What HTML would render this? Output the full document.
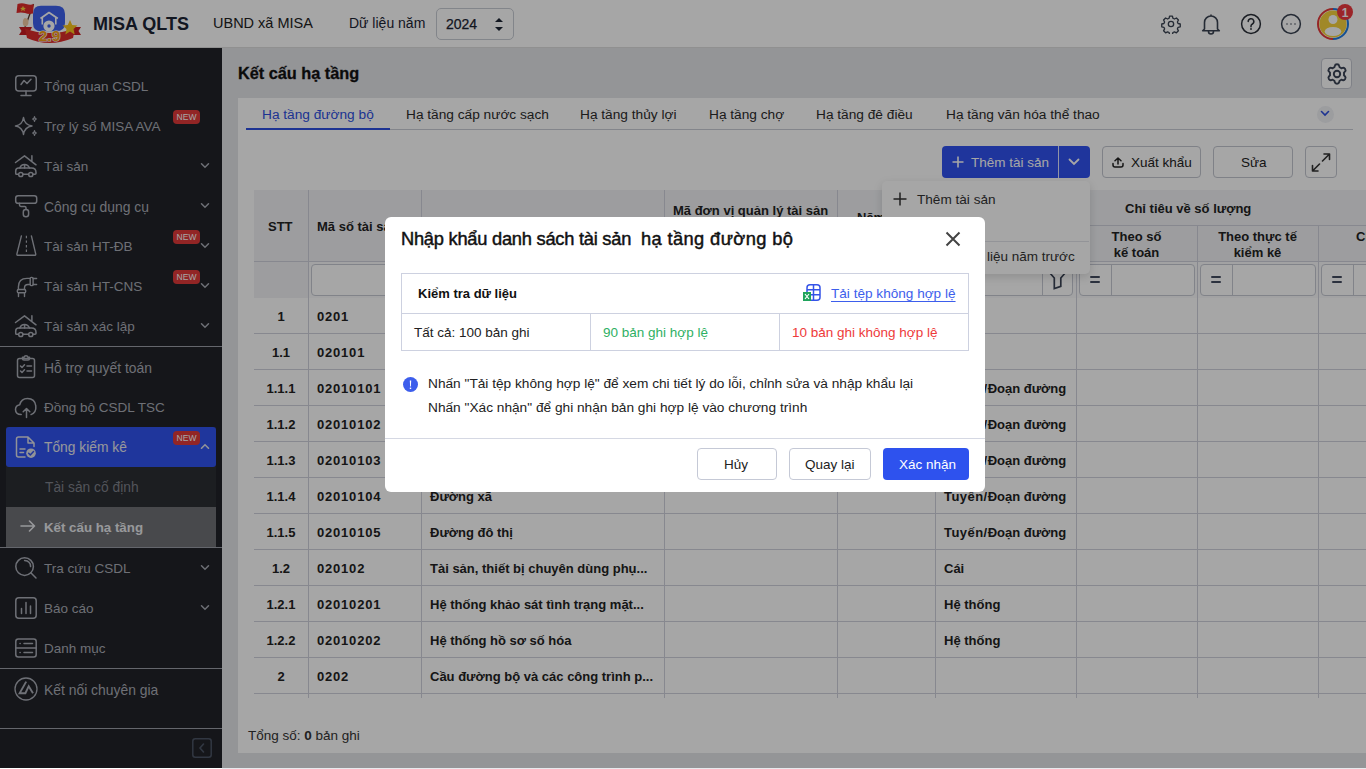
<!DOCTYPE html>
<html><head><meta charset="utf-8">
<style>
*{box-sizing:border-box;margin:0;padding:0}
html,body{width:1366px;height:769px;overflow:hidden;background:#fff;font-family:"Liberation Sans",sans-serif;color:#212121}
.abs{position:absolute}
#hdr{position:absolute;left:0;top:0;width:1366px;height:48px;background:#fff;border-bottom:1px solid #ddd}
#side{position:absolute;left:0;top:48px;width:222px;height:720px;background:#212328}
.si{position:absolute;left:0;width:222px;height:40px;color:#a9acb6;font-size:13.5px}
.si .ic{position:absolute;left:15px;top:9px;width:22px;height:22px;overflow:visible}
.si .tx{position:absolute;left:44px;top:12.5px;white-space:nowrap}
.si .chev{position:absolute;left:200px;top:16px;width:10px;height:7px}
.new{position:absolute;left:173px;top:4px;width:27px;height:14px;background:#e03a3a;border-radius:4px;color:#fff;font-size:8.5px;line-height:14px;text-align:center}
.sep{position:absolute;left:0;width:222px;height:1px;background:#9a9da6}
#content{position:absolute;left:222px;top:48px;width:1144px;height:720px;background:#e4e5e9}
#overlay{position:absolute;left:0;top:0;width:1366px;height:768px;background:rgba(0,0,0,0.35)}
#modal{position:absolute;left:385px;top:217px;width:600px;height:275px;background:#fff;border-radius:6px}

.t{position:absolute;white-space:nowrap}
.btn{position:absolute;border:1px solid #c3c6cf;border-radius:4px;background:#fff}
.cl{position:absolute;width:1px;background:#cfd2dc}
.rl{position:absolute;height:1px;background:#cfd2dc}
.th{position:absolute;font-size:13px;font-weight:bold;color:#222;white-space:nowrap}
.td{position:absolute;font-size:13px;font-weight:bold;color:#222;white-space:nowrap}
</style></head>
<body>
<div id="hdr">
  <svg class="abs" style="left:15px;top:0" width="70" height="46" viewBox="0 0 70 46">
    <line x1="9" y1="30" x2="18.5" y2="4" stroke="#5a3a2a" stroke-width="1.3"/>
    <path d="M2.5 4 Q7 2.5 11 4 Q15 5.2 18.8 4.2 L18 13.5 Q14 14.5 10 13 Q6 11.8 1.5 13 Z" fill="#e02a2a"/>
    <path d="M8 5.8 l.9 1.9 2 .2 -1.5 1.3 .5 2 -1.9-1.1 -1.9 1.1 .5-2 -1.5-1.3 2-.2z" fill="#f7d23a"/>
    <path d="M10 18 Q13.5 18.5 13.5 21.5 Q13.5 26 10.5 26.5 Q7.5 26 7.8 22 Q8 18.5 10 18Z" fill="#f2c9a3"/>
    <path d="M18 14 Q18 5.8 26 5.8 H41 Q50 5.8 50 14 V23 Q50 31.2 41 31.2 H26 Q18 31.2 18 23Z" fill="#3e62ee"/>
    <path d="M25.5 18.5 L34 12.6 L42.8 18.5" fill="none" stroke="#fff" stroke-width="1.8" stroke-linejoin="round"/>
    <path d="M27.3 17.5 V24.5 M40.8 17.5 V24.5" fill="none" stroke="#fff" stroke-width="1.6"/>
    <circle cx="34" cy="26" r="5.6" fill="#fff"/>
    <circle cx="34" cy="26" r="1.7" fill="#3e62ee"/>
    <path d="M4 27 H17 L15 31 L17 35 H4 L6.5 31Z" fill="#c91d22"/>
    <path d="M53 27 H66 L63.5 31 L66 35 H53 L55 31Z" fill="#c91d22"/>
    <path d="M10 28.5 Q34 37.5 60 28.5 L58 38 Q34 48 12 38 Z" fill="#dc2b2a"/>
    <path d="M63 20 l2.2 5 5.3.5 -4 3.6 1.2 5.3 -4.7-2.8 -4.7 2.8 1.2-5.3 -4-3.6 5.3-.5z" fill="#f9c51d" transform="translate(-8,0)"/>
    <text x="34.5" y="41" text-anchor="middle" font-family="Liberation Sans" font-weight="bold" font-size="15.5" fill="#f6a117" stroke="#fff" stroke-width="1.2" paint-order="stroke">2.9</text>
  </svg>
  <div class="abs" style="left:93px;top:14px;font-size:18px;font-weight:bold;color:#1c2434;white-space:nowrap">MISA QLTS</div>
  <div class="abs" style="left:213px;top:15px;font-size:14.5px;color:#222;white-space:nowrap">UBND xã MISA</div>
  <div class="abs" style="left:349px;top:15px;font-size:14px;color:#1c2434;white-space:nowrap">Dữ liệu năm</div>
  <div class="abs" style="left:436px;top:8px;width:78px;height:32px;border:1px solid #c8ccd4;border-radius:5px">
    <div class="abs" style="left:9px;top:7px;font-size:14px;color:#1c2434;-webkit-text-stroke:0.25px #1c2434">2024</div>
    <svg class="abs" style="left:58px;top:9px" width="8" height="13" viewBox="0 0 8 13"><path d="M0 4 L4 0 L8 4Z M0 9 L4 13 L8 9Z" fill="#1c2434"/></svg>
  </div>
  <!-- right icons -->
  <svg class="abs" style="left:1161px;top:14px" width="20" height="20" viewBox="0 0 24 24" fill="none" stroke="#3a4352" stroke-width="1.6" stroke-linejoin="round">
    <path d="M10.3 2.5h3.4l.6 2.6 1.8.9 2.4-1.2 2.4 2.4-1.2 2.4.8 1.8 2.6.6v3.4l-2.6.6-.8 1.8 1.2 2.4-2.4 2.4-2.4-1.2-1.8.8-.6 2.6h-3.4l-.6-2.6-1.8-.8-2.4 1.2-2.4-2.4 1.2-2.4-.8-1.8-2.6-.6v-3.4l2.6-.6.8-1.8-1.2-2.4 2.4-2.4 2.4 1.2 1.8-.9z"/>
    <circle cx="12" cy="12" r="3.2"/>
  </svg>
  <svg class="abs" style="left:1200px;top:13px" width="22" height="22" viewBox="0 0 22 22" fill="none" stroke="#3a4352" stroke-width="1.6" stroke-linejoin="round">
    <path d="M11 1.5v1.5 M4.5 16V9.5a6.5 6.5 0 0 1 13 0V16l1.8 1.8H2.7Z M8.5 18.5a2.5 2.5 0 0 0 5 0"/>
  </svg>
  <svg class="abs" style="left:1240px;top:13px" width="22" height="22" viewBox="0 0 22 22" fill="none" stroke="#2a2f38" stroke-width="1.5">
    <circle cx="11" cy="11" r="9.4"/>
    <path d="M8.2 8.6a2.8 2.8 0 1 1 4.2 2.4c-.9.5-1.4 1-1.4 2v.8" stroke-linecap="round"/>
    <circle cx="11" cy="16" r=".9" fill="#2a2f38" stroke="none"/>
  </svg>
  <svg class="abs" style="left:1280px;top:13px" width="22" height="22" viewBox="0 0 22 22" fill="none" stroke="#3a4352" stroke-width="1.5">
    <circle cx="11" cy="11" r="9.4"/>
    <circle cx="7" cy="11" r=".75" fill="#3a4352" stroke="none"/><circle cx="11" cy="11" r=".75" fill="#3a4352" stroke="none"/><circle cx="15" cy="11" r=".75" fill="#3a4352" stroke="none"/>
  </svg>
  <svg class="abs" style="left:1316px;top:2px" width="40" height="40" viewBox="0 0 40 40">
    <path d="M17 7 A15 15 0 0 0 17 37" fill="none" stroke="#e53a3a" stroke-width="2"/>
    <path d="M17 7 A15 15 0 0 1 17 37" fill="none" stroke="#1f7be0" stroke-width="2"/>
    <circle cx="17" cy="22" r="13.6" fill="#f6d23c"/>
    <circle cx="17" cy="17.5" r="4.5" fill="#fff"/>
    <ellipse cx="17" cy="29.5" rx="8.3" ry="4.5" fill="#fff"/>
    <circle cx="29" cy="10" r="8" fill="#ef3a3f"/>
    <text x="29" y="14.5" text-anchor="middle" font-family="Liberation Sans" font-weight="bold" font-size="12" fill="#fff">1</text>
  </svg>
</div>
<div id="side"><div class="si" style="top:18px;"><svg class="ic" viewBox="0 0 22 22" fill="none" stroke="#a9acb6" stroke-width="1.5" stroke-linecap="round" stroke-linejoin="round"><rect x="0.75" y="0.75" width="20.5" height="15.2" rx="3"/><path d="M11 16 V20.5 M6 20.5 H16 M6 9.5 L9 5.5 L12 8.5 L16 4.2"/></svg><div class="tx" style="">Tổng quan CSDL</div></div>
<div class="si" style="top:58px;"><svg class="ic" viewBox="0 0 22 22" fill="none" stroke="#a9acb6" stroke-width="1.5" stroke-linecap="round" stroke-linejoin="round"><path d="M8.5 2.5 Q9.6 9.9 17 11 Q9.6 12.1 8.5 19.5 Q7.4 12.1 0.5 11 Q7.4 9.9 8.5 2.5Z"/><path d="M19.5 1.5 Q19.8 3.7 21.5 4 Q19.8 4.3 19.5 6.5 Q19.2 4.3 17.5 4 Q19.2 3.7 19.5 1.5Z" stroke-width="1.2"/><path d="M19.5 15.5 Q19.8 17.7 21.5 18 Q19.8 18.3 19.5 20.5 Q19.2 18.3 17.5 18 Q19.2 17.7 19.5 15.5Z" stroke-width="1.2"/></svg><div class="tx" style="">Trợ lý số MISA AVA</div><div class="new">NEW</div></div>
<div class="si" style="top:98px;"><svg class="ic" viewBox="0 0 22 22" fill="none" stroke="#a9acb6" stroke-width="1.5" stroke-linecap="round" stroke-linejoin="round"><path d="M0.5 7.5 L9.5 0.8 L21 9.8 M16.9 0.8 V5.8"/><path d="M4.8 13 Q6 9.6 9.5 9.6 Q13 9.6 14.5 13 M9.6 9.8 V13"/><path d="M3 19.3 H1.6 Q0.7 19.3 0.7 18 V16 Q0.7 13 3.7 13 H16.5 Q21 13 21 17.5 V18.3 Q21 19.3 20 19.3 H18.2 M13.5 19.3 H8.1"/><circle cx="5.8" cy="19.5" r="2.1"/><circle cx="15.8" cy="19.5" r="2.1"/></svg><div class="tx" style="">Tài sản</div><svg class="chev" viewBox="0 0 10 7"><path d="M1.5 1.8 L5 5.2 L8.5 1.8" fill="none" stroke="#a9acb6" stroke-width="1.5" stroke-linecap="round"/></svg></div>
<div class="si" style="top:138px;"><svg class="ic" viewBox="0 0 22 22" fill="none" stroke="#a9acb6" stroke-width="1.5" stroke-linecap="round" stroke-linejoin="round"><rect x="0.7" y="0.7" width="21" height="7.6" rx="2.4"/><path d="M4.5 8.3 V10 Q4.5 11.4 6 11.4 H9.6 Q11 11.4 11 12.8 V14.5"/><rect x="8.3" y="14.5" width="5.3" height="7.2" rx="2.5"/></svg><div class="tx" style=";font-size:13.9px">Công cụ dụng cụ</div><svg class="chev" viewBox="0 0 10 7"><path d="M1.5 1.8 L5 5.2 L8.5 1.8" fill="none" stroke="#a9acb6" stroke-width="1.5" stroke-linecap="round"/></svg></div>
<div class="si" style="top:178px;"><svg class="ic" viewBox="0 0 22 22" fill="none" stroke="#a9acb6" stroke-width="1.5" stroke-linecap="round" stroke-linejoin="round"><path d="M6.4 0.9 L1.9 18.8 Q1.6 20.3 3.2 20.3 H19.4 Q21 20.3 20.7 18.8 L16.4 0.9" stroke-width="1.4"/><path d="M11.4 0.8 V3.2 M11.4 5.4 V7.8 M11.4 10 V12.4 M11.4 14.6 V17" stroke-width="1.2" stroke-linecap="butt"/></svg><div class="tx" style="">Tài sản HT-ĐB</div><div class="new">NEW</div><svg class="chev" viewBox="0 0 10 7"><path d="M1.5 1.8 L5 5.2 L8.5 1.8" fill="none" stroke="#a9acb6" stroke-width="1.5" stroke-linecap="round"/></svg></div>
<div class="si" style="top:218px;"><svg class="ic" viewBox="0 0 22 22" fill="none" stroke="#a9acb6" stroke-width="1.5" stroke-linecap="round" stroke-linejoin="round"><path d="M3.4 14.5 V12 Q3.4 3.4 12 3.4 H15.2 M9.5 14.5 V13 Q9.5 9.5 13 9.5 H15.2 M18.1 3.5 H21.6 M18.1 9.5 H21.6 M3.5 17.7 V21.6 M9.5 17.7 V21.6" stroke-width="1.4"/><rect x="15.2" y="2.4" width="2.9" height="8.2" rx="1.2" stroke-width="1.4"/><rect x="2.3" y="14.5" width="8.4" height="3.2" rx="1.2" stroke-width="1.4"/></svg><div class="tx" style="">Tài sản HT-CNS</div><div class="new">NEW</div><svg class="chev" viewBox="0 0 10 7"><path d="M1.5 1.8 L5 5.2 L8.5 1.8" fill="none" stroke="#a9acb6" stroke-width="1.5" stroke-linecap="round"/></svg></div>
<div class="si" style="top:258px;"><svg class="ic" viewBox="0 0 22 22" fill="none" stroke="#a9acb6" stroke-width="1.5" stroke-linecap="round" stroke-linejoin="round"><path d="M0.5 7.5 L9.5 0.8 L21 9.8 M16.9 0.8 V5.8"/><path d="M4.8 13 Q6 9.6 9.5 9.6 Q13 9.6 14.5 13 M9.6 9.8 V13"/><path d="M3 19.3 H1.6 Q0.7 19.3 0.7 18 V16 Q0.7 13 3.7 13 H16.5 Q21 13 21 17.5 V18.3 Q21 19.3 20 19.3 H18.2 M13.5 19.3 H8.1"/><circle cx="5.8" cy="19.5" r="2.1"/><circle cx="15.8" cy="19.5" r="2.1"/></svg><div class="tx" style="">Tài sản xác lập</div><svg class="chev" viewBox="0 0 10 7"><path d="M1.5 1.8 L5 5.2 L8.5 1.8" fill="none" stroke="#a9acb6" stroke-width="1.5" stroke-linecap="round"/></svg></div>
<div class="sep" style="top:298px"></div><div class="si" style="top:299px;"><svg class="ic" viewBox="0 0 22 22" fill="none" stroke="#a9acb6" stroke-width="1.5" stroke-linecap="round" stroke-linejoin="round"><rect x="2.5" y="2.5" width="17" height="19" rx="2"/><path d="M7.5 2.5 V1.2 H9 Q9.5 -.2 11 -.2 Q12.5 -.2 13 1.2 H14.5 V2.5 Q14.5 4 13 4 H9 Q7.5 4 7.5 2.5Z"/><path d="M5.5 10 L7 11.4 L9.5 8.7 M5.5 15 L7 16.4 L9.5 13.7 M12 10 H16.5 M12 15 H16.5"/></svg><div class="tx" style=";font-size:13.9px">Hỗ trợ quyết toán</div></div>
<div class="si" style="top:339px;"><svg class="ic" viewBox="0 0 22 22" fill="none" stroke="#a9acb6" stroke-width="1.5" stroke-linecap="round" stroke-linejoin="round"><path d="M6.2 18.5 Q0.5 18.5 0.5 13.5 Q0.5 9.5 4.8 8.7 Q6.2 2.5 12.5 2.5 Q19.8 2.5 20.8 9.8 Q21.5 16.5 16 18.6"/><path d="M11.5 21.5 V12.8 M8.2 15.8 L11.5 12.5 L14.8 15.8"/></svg><div class="tx" style="">Đồng bộ CSDL TSC</div></div>
<div class="abs" style="left:6px;top:379px;width:210px;height:120px;background:#2c2e33"></div><div class="abs" style="left:6px;top:379px;width:210px;height:40px;background:#3153f0;border-radius:3px"></div><div class="si" style="top:379px;"><svg class="ic" viewBox="0 0 22 22" fill="none" stroke="#dfe2ea" stroke-width="1.5" stroke-linecap="round" stroke-linejoin="round"><path d="M13 1 H3.5 Q1.5 1 1.5 3 V19 Q1.5 21 3.5 21 H10 M13 1 L19 7 V10.5 M13 1 V7 H19 M5 13 H10 M5 16.5 H8.5"/><circle cx="16" cy="17.2" r="4.8" fill="#dfe2ea" stroke="none"/><path d="M13.6 17.2 L15.3 18.9 L18.5 15.6" stroke="#3153f0" stroke-width="1.5"/></svg><div class="tx" style="color:#e6e8ef;font-size:13.8px">Tổng kiếm kê</div><div class="new">NEW</div><svg class="chev" viewBox="0 0 10 7"><path d="M1.5 5.2 L5 1.8 L8.5 5.2" fill="none" stroke="#dfe2ea" stroke-width="1.6" stroke-linecap="round"/></svg></div>
<div class="si" style="top:419px;"><div class="tx" style="left:45px;color:#7f828b;font-size:13.8px">Tài sản cố định</div></div>
<div class="abs" style="left:6px;top:459px;width:210px;height:40px;background:#6f7075"></div><div class="si" style="top:459px;"><div class="tx" style="font-weight:bold;color:#e9eaee;font-size:13.3px">Kết cấu hạ tầng</div></div>
<svg class="abs" style="left:20px;top:472px" width="16" height="12" viewBox="0 0 16 12"><path d="M1 6 H14.5 M9.5 1 L14.5 6 L9.5 11" fill="none" stroke="#e9eaee" stroke-width="1.6" stroke-linecap="round" stroke-linejoin="round"/></svg><div class="sep" style="top:499px"></div><div class="si" style="top:500px;"><svg class="ic" viewBox="0 0 22 22" fill="none" stroke="#a9acb6" stroke-width="1.5" stroke-linecap="round" stroke-linejoin="round"><circle cx="9.6" cy="9.6" r="8.8"/><path d="M15.8 15.8 L21 21 M9.6 3.6 Q15.4 4 15.6 9.6"/></svg><div class="tx" style="">Tra cứu CSDL</div><svg class="chev" viewBox="0 0 10 7"><path d="M1.5 1.8 L5 5.2 L8.5 1.8" fill="none" stroke="#a9acb6" stroke-width="1.5" stroke-linecap="round"/></svg></div>
<div class="si" style="top:540px;"><svg class="ic" viewBox="0 0 22 22" fill="none" stroke="#a9acb6" stroke-width="1.5" stroke-linecap="round" stroke-linejoin="round"><rect x="0.8" y="0.8" width="20.4" height="20.4" rx="3"/><path d="M6.5 11.5 V16.5 M11 5.5 V16.5 M15.5 9 V16.5"/></svg><div class="tx" style="">Báo cáo</div><svg class="chev" viewBox="0 0 10 7"><path d="M1.5 1.8 L5 5.2 L8.5 1.8" fill="none" stroke="#a9acb6" stroke-width="1.5" stroke-linecap="round"/></svg></div>
<div class="si" style="top:580px;"><svg class="ic" viewBox="0 0 22 22" fill="none" stroke="#a9acb6" stroke-width="1.5" stroke-linecap="round" stroke-linejoin="round"><rect x="0.8" y="2" width="20.4" height="18" rx="2.5"/><path d="M0.8 11 H21.2 M5 6.5 H5.2 M9 6.5 H17.5 M5 15.5 H5.2 M9 15.5 H17.5"/></svg><div class="tx" style="">Danh mục</div></div>
<div class="sep" style="top:620px"></div><div class="si" style="top:621px;"><svg class="ic" viewBox="0 0 22 22" fill="none" stroke="#a9acb6" stroke-width="1.5" stroke-linecap="round" stroke-linejoin="round"><circle cx="11" cy="11" r="11" stroke-width="1.3"/><path d="M11.2 3.6 L4.6 15.2 H10.4 L13.7 8.2 L18 15.2" stroke-width="1.9" stroke-linejoin="miter" stroke-linecap="butt"/></svg><div class="tx" style=";font-size:13.9px">Kết nối chuyên gia</div></div>
<div class="sep" style="top:680px"></div><svg class="abs" style="left:192px;top:690px" width="20" height="20" viewBox="0 0 20 20"><rect x="0.8" y="0.8" width="18.4" height="18.4" rx="2.5" fill="none" stroke="#4c5566" stroke-width="1.5"/><path d="M11.5 6 L8 10 L11.5 14" fill="none" stroke="#4c5566" stroke-width="1.6" stroke-linecap="round"/></svg></div>
<div id="content"></div>
<div class="t" style="left:238px;top:64px;font-size:16.3px;font-weight:bold;color:#111;-webkit-text-stroke:0.3px #111">Kết cấu hạ tầng</div>
<div class="btn" style="left:1321px;top:58px;width:31px;height:31px;background:#fdfdfd"></div>
<svg class="abs" style="left:1324px;top:61px" width="26" height="26" viewBox="0 0 22 22" fill="none" stroke="#3b4456" stroke-width="1.6" stroke-linejoin="round"><path d="M11 1.8 Q12.6 1.8 12.9 3.2 L13.2 4.3 Q14 4.7 14.7 5.2 L15.8 4.8 Q17.1 4.4 17.9 5.7 Q18.7 7.1 17.7 8 L16.9 8.8 Q17 9.9 16.9 11.1 L17.7 11.9 Q18.7 12.9 17.9 14.3 Q17.1 15.6 15.8 15.2 L14.7 14.8 Q14 15.3 13.2 15.7 L12.9 16.8 Q12.6 18.2 11 18.2 Q9.4 18.2 9.1 16.8 L8.8 15.7 Q8 15.3 7.3 14.8 L6.2 15.2 Q4.9 15.6 4.1 14.3 Q3.3 12.9 4.3 11.9 L5.1 11.1 Q5 9.9 5.1 8.8 L4.3 8 Q3.3 7.1 4.1 5.7 Q4.9 4.4 6.2 4.8 L7.3 5.2 Q8 4.7 8.8 4.3 L9.1 3.2 Q9.4 1.8 11 1.8Z" transform="translate(0,1)"/><circle cx="11" cy="11" r="2.7"/></svg>
<div class="abs" style="left:238px;top:98px;width:1128px;height:655px;background:#fff"></div>
<div class="t" style="left:262px;top:107px;font-size:13.7px;color:#2d4fe0">Hạ tầng đường bộ</div>
<div class="t" style="left:406px;top:107px;font-size:13.7px;color:#2b2b2b">Hạ tầng cấp nước sạch</div>
<div class="t" style="left:580px;top:107px;font-size:13.7px;color:#2b2b2b">Hạ tầng thủy lợi</div>
<div class="t" style="left:709px;top:107px;font-size:13.7px;color:#2b2b2b">Hạ tầng chợ</div>
<div class="t" style="left:816px;top:107px;font-size:13.7px;color:#2b2b2b">Hạ tầng đê điều</div>
<div class="t" style="left:946px;top:107px;font-size:13.7px;color:#2b2b2b">Hạ tầng văn hóa thể thao</div>
<div class="abs" style="left:246px;top:129px;width:1107px;height:1px;background:#c9ccd6"></div>
<div class="abs" style="left:246px;top:128px;width:144px;height:2px;background:#2d4fe0"></div>
<div class="abs" style="left:1317px;top:106px;width:17px;height:17px;border-radius:50%;background:#f0f1f5"></div>
<svg class="abs" style="left:1320px;top:110px" width="10" height="7" viewBox="0 0 10 7"><path d="M1.5 1.5 L5 5 L8.5 1.5" fill="none" stroke="#2d4fe0" stroke-width="1.6" stroke-linecap="round"/></svg>
<div class="abs" style="left:942px;top:146px;width:148px;height:32px;background:#3052f0;border-radius:4px"></div>
<div class="abs" style="left:1058px;top:146px;width:1px;height:32px;background:#dfe5ff"></div>
<svg class="abs" style="left:952px;top:156px" width="12" height="12" viewBox="0 0 12 12"><path d="M6 0.5 V11.5 M0.5 6 H11.5" stroke="#fff" stroke-width="1.6"/></svg>
<div class="t" style="left:971px;top:155px;font-size:13.5px;color:#fff">Thêm tài sản</div>
<svg class="abs" style="left:1068px;top:158px" width="12" height="8" viewBox="0 0 12 8"><path d="M1.5 1.5 L6 6 L10.5 1.5" fill="none" stroke="#fff" stroke-width="1.8" stroke-linecap="round"/></svg>
<div class="btn" style="left:1102px;top:146px;width:99px;height:32px"></div>
<svg class="abs" style="left:1112px;top:157px" width="12" height="11" viewBox="0 0 12 11"><path d="M6 7 V1 M3 3.8 L6 1 L9 3.8 M1 6.5 V8 Q1 10 3 10 H9 Q11 10 11 8 V6.5" fill="none" stroke="#222" stroke-width="1.5" stroke-linecap="round" stroke-linejoin="round"/></svg>
<div class="t" style="left:1131px;top:155px;font-size:13.5px;color:#222">Xuất khẩu</div>
<div class="btn" style="left:1213px;top:146px;width:80px;height:32px"></div>
<div class="t" style="left:1241px;top:155px;font-size:13.5px;color:#222">Sửa</div>
<div class="btn" style="left:1305px;top:146px;width:32px;height:32px"></div>
<svg class="abs" style="left:1311px;top:153px" width="20" height="19" viewBox="0 0 20 19"><path d="M11.5 8 L18.5 1 M13 1 H18.5 V6.5 M8.5 11 L1.5 18 M1.5 12.5 V18 H7" fill="none" stroke="#333" stroke-width="1.6" stroke-linecap="round" stroke-linejoin="round"/></svg>
<div class="abs" style="left:254px;top:190px;width:1112px;height:71px;background:#f1f2f5"></div>
<div class="abs" style="left:308px;top:261px;width:1058px;height:37px;background:#f9f9fb"></div><div class="abs" style="left:254px;top:261px;width:54px;height:37px;background:#f1f2f5"></div>
<div class="cl" style="left:308px;top:190px;height:508px"></div>
<div class="cl" style="left:421px;top:190px;height:508px"></div>
<div class="cl" style="left:664px;top:190px;height:508px"></div>
<div class="cl" style="left:837px;top:190px;height:508px"></div>
<div class="cl" style="left:935px;top:190px;height:508px"></div>
<div class="cl" style="left:1076px;top:190px;height:508px"></div>
<div class="cl" style="left:1197px;top:225px;height:473px"></div>
<div class="cl" style="left:1318px;top:225px;height:473px"></div>
<div class="rl" style="left:1076px;top:225px;width:290px"></div>
<div class="rl" style="left:254px;top:261px;width:1112px"></div>

<div class="rl" style="left:254px;top:333px;width:1112px"></div>
<div class="rl" style="left:254px;top:369px;width:1112px"></div>
<div class="rl" style="left:254px;top:405px;width:1112px"></div>
<div class="rl" style="left:254px;top:441px;width:1112px"></div>
<div class="rl" style="left:254px;top:477px;width:1112px"></div>
<div class="rl" style="left:254px;top:513px;width:1112px"></div>
<div class="rl" style="left:254px;top:549px;width:1112px"></div>
<div class="rl" style="left:254px;top:585px;width:1112px"></div>
<div class="rl" style="left:254px;top:621px;width:1112px"></div>
<div class="rl" style="left:254px;top:657px;width:1112px"></div>
<div class="rl" style="left:254px;top:693px;width:1112px"></div>
<div class="th" style="left:268px;top:219px">STT</div>
<div class="th" style="left:317px;top:219px">Mã số tài sản</div>
<div class="th" style="left:673px;top:203px">Mã đơn vị quản lý tài sản</div>
<div class="th" style="left:857px;top:210px">Năm...</div>
<div class="th" style="left:1125px;top:201px">Chỉ tiêu về số lượng</div>
<div class="th" style="left:1076px;top:229px;width:121px;text-align:center;line-height:15.5px">Theo số<br>kế toán</div>
<div class="th" style="left:1197px;top:229px;width:121px;text-align:center;line-height:15.5px">Theo thực tế<br>kiểm kê</div>
<div class="th" style="left:1356px;top:229px">Chỉ</div>
<div class="btn" style="left:311px;top:264px;width:107px;height:32px;border-color:#c6c9d3"></div>
<div class="btn" style="left:938px;top:264px;width:135px;height:32px;border-color:#c6c9d3"></div>
<div class="cl" style="left:1042px;top:265px;height:30px;background:#c6c9d3"></div>
<svg class="abs" style="left:1048px;top:272px" width="20" height="18" viewBox="0 0 20 18"><path d="M1.5 0.5 L6.3 6 V16.5 L12.8 14.3 V6 L17.6 0.5" fill="none" stroke="#3b4456" stroke-width="1.7" stroke-linejoin="miter"/></svg>
<div class="btn" style="left:1079px;top:264px;width:116px;height:32px;border-color:#c6c9d3"></div>
<div class="cl" style="left:1111px;top:265px;height:30px;background:#c6c9d3"></div>
<div class="abs" style="left:1090px;top:276px;width:10px;height:2.2px;border-radius:1px;background:#434c60"></div><div class="abs" style="left:1090px;top:281px;width:10px;height:2.2px;border-radius:1px;background:#434c60"></div>
<div class="btn" style="left:1200px;top:264px;width:116px;height:32px;border-color:#c6c9d3"></div>
<div class="cl" style="left:1232px;top:265px;height:30px;background:#c6c9d3"></div>
<div class="abs" style="left:1211px;top:276px;width:10px;height:2.2px;border-radius:1px;background:#434c60"></div><div class="abs" style="left:1211px;top:281px;width:10px;height:2.2px;border-radius:1px;background:#434c60"></div>
<div class="btn" style="left:1321px;top:264px;width:116px;height:32px;border-color:#c6c9d3"></div>
<div class="cl" style="left:1353px;top:265px;height:30px;background:#c6c9d3"></div>
<div class="abs" style="left:1332px;top:276px;width:10px;height:2.2px;border-radius:1px;background:#434c60"></div><div class="abs" style="left:1332px;top:281px;width:10px;height:2.2px;border-radius:1px;background:#434c60"></div>
<div class="td" style="left:254px;top:309px;width:54px;text-align:center">1</div>
<div class="td" style="letter-spacing:0.8px;left:317px;top:309px">0201</div>
<div class="td" style="left:254px;top:345px;width:54px;text-align:center">1.1</div>
<div class="td" style="letter-spacing:0.8px;left:317px;top:345px">020101</div>
<div class="td" style="left:254px;top:381px;width:54px;text-align:center">1.1.1</div>
<div class="td" style="letter-spacing:0.8px;left:317px;top:381px">02010101</div>
<div class="td" style="left:944px;top:381px"><span style="letter-spacing:0.45px">Tuyến/</span>Đoạn đường</div>
<div class="td" style="left:254px;top:417px;width:54px;text-align:center">1.1.2</div>
<div class="td" style="letter-spacing:0.8px;left:317px;top:417px">02010102</div>
<div class="td" style="left:944px;top:417px"><span style="letter-spacing:0.45px">Tuyến/</span>Đoạn đường</div>
<div class="td" style="left:254px;top:453px;width:54px;text-align:center">1.1.3</div>
<div class="td" style="letter-spacing:0.8px;left:317px;top:453px">02010103</div>
<div class="td" style="left:944px;top:453px"><span style="letter-spacing:0.45px">Tuyến/</span>Đoạn đường</div>
<div class="td" style="left:254px;top:489px;width:54px;text-align:center">1.1.4</div>
<div class="td" style="letter-spacing:0.8px;left:317px;top:489px">02010104</div>
<div class="td" style="left:430px;top:489px">Đường xã</div>
<div class="td" style="left:944px;top:489px"><span style="letter-spacing:0.45px">Tuyến/</span>Đoạn đường</div>
<div class="td" style="left:254px;top:525px;width:54px;text-align:center">1.1.5</div>
<div class="td" style="letter-spacing:0.8px;left:317px;top:525px">02010105</div>
<div class="td" style="left:430px;top:525px">Đường đô thị</div>
<div class="td" style="left:944px;top:525px"><span style="letter-spacing:0.45px">Tuyến/</span>Đoạn đường</div>
<div class="td" style="left:254px;top:561px;width:54px;text-align:center">1.2</div>
<div class="td" style="letter-spacing:0.8px;left:317px;top:561px">020102</div>
<div class="td" style="left:430px;top:561px">Tài sản, thiết bị chuyên dùng phụ...</div>
<div class="td" style="left:944px;top:561px">Cái</div>
<div class="td" style="left:254px;top:597px;width:54px;text-align:center">1.2.1</div>
<div class="td" style="letter-spacing:0.8px;left:317px;top:597px">02010201</div>
<div class="td" style="left:430px;top:597px">Hệ thống khảo sát tình trạng mặt...</div>
<div class="td" style="left:944px;top:597px">Hệ thống</div>
<div class="td" style="left:254px;top:633px;width:54px;text-align:center">1.2.2</div>
<div class="td" style="letter-spacing:0.8px;left:317px;top:633px">02010202</div>
<div class="td" style="left:430px;top:633px">Hệ thống hồ sơ số hóa</div>
<div class="td" style="left:944px;top:633px">Hệ thống</div>
<div class="td" style="left:254px;top:669px;width:54px;text-align:center">2</div>
<div class="td" style="letter-spacing:0.8px;left:317px;top:669px">0202</div>
<div class="td" style="left:430px;top:669px">Cầu đường bộ và các công trình p...</div>
<div class="t" style="left:248px;top:728px;font-size:13.5px;color:#333">Tổng số: <b>0</b> bản ghi</div>
<div class="abs" style="left:882px;top:181px;width:208px;height:93px;background:#fff;border-radius:5px;box-shadow:0 3px 10px rgba(0,0,0,0.14)"></div>
<svg class="abs" style="left:893px;top:192px" width="14" height="14" viewBox="0 0 14 14"><path d="M7 0.5 V13.5 M0.5 7 H13.5" stroke="#333" stroke-width="1.5"/></svg>
<div class="t" style="left:917px;top:192px;font-size:13.6px;color:#333">Thêm tài sản</div>
<div class="abs" style="left:882px;top:241px;width:207px;height:1px;background:#e2e4ea"></div>
<div class="t" style="left:987px;top:249px;font-size:13.5px;color:#333">liệu năm trước</div>
<div class="abs" style="left:222px;top:768px;width:1144px;height:1px;background:#e8eaee"></div>
<div id="overlay"></div>
<div id="modal">
  <div class="t" id="mt1" style="letter-spacing:-0.25px;left:16px;top:11px;font-size:18.3px;color:#111;-webkit-text-stroke:0.45px #111">Nhập khẩu danh sách tài sản</div><div class="t" id="mt2" style="letter-spacing:0.38px;left:256px;top:11px;font-size:18.3px;color:#111;-webkit-text-stroke:0.45px #111">hạ tầng đường bộ</div>
  <svg class="abs" style="left:560px;top:14px" width="16" height="16" viewBox="0 0 16 16"><path d="M1.5 1.5 L14.5 14.5 M14.5 1.5 L1.5 14.5" stroke="#444" stroke-width="2"/></svg>
  <div class="abs" style="left:16px;top:56px;width:568px;height:78px;border:1px solid #cdd1e0"></div>
  <div class="abs" style="left:16px;top:96px;width:568px;height:1px;background:#cdd1e0"></div>
  <div class="abs" style="left:205px;top:96px;width:1px;height:38px;background:#cdd1e0"></div>
  <div class="abs" style="left:394px;top:96px;width:1px;height:38px;background:#cdd1e0"></div>
  <div class="t" style="left:33px;top:69px;font-size:13px;font-weight:bold;color:#111">Kiểm tra dữ liệu</div>
  <svg class="abs" style="left:418px;top:67px" width="18" height="17" viewBox="0 0 18 17"><rect x="4" y="0.8" width="13" height="15.4" rx="3" fill="none" stroke="#3553e8" stroke-width="1.5"/><path d="M4 5.8 H17 M4 10.8 H17 M10.5 1 V16" stroke="#3553e8" stroke-width="1.5"/><rect x="0" y="8" width="8" height="9" fill="#1fa35c"/><path d="M2 10 L6 15 M6 10 L2 15" stroke="#fff" stroke-width="1.2"/></svg>
  <div class="t" style="left:446px;top:69px;font-size:13.6px;color:#3d5eec;text-decoration:underline;text-underline-offset:3px;text-decoration-thickness:1px">Tải tệp không hợp lệ</div>
  <div class="t" style="left:29px;top:108px;font-size:13.5px;color:#222">Tất cả: 100 bản ghi</div>
  <div class="t" style="left:218px;top:108px;font-size:13.5px;color:#2fb064">90 bản ghi hợp lệ</div>
  <div class="t" style="left:407px;top:108px;font-size:13.5px;color:#ee3a3a">10 bản ghi không hợp lệ</div>
  <svg class="abs" style="left:18px;top:160px" width="15" height="15" viewBox="0 0 15 15"><circle cx="7.5" cy="7.5" r="7.5" fill="#3d5eec"/><path d="M6.8 3.6 H8.2 L7.9 9.6 H7.1Z" fill="#fff"/><rect x="6.8" y="10.6" width="1.4" height="1.4" fill="#fff"/></svg>
  <div class="t" style="left:43px;top:159px;font-size:13.7px;color:#222">Nhấn "Tải tệp không hợp lệ" để xem chi tiết lý do lỗi, chỉnh sửa và nhập khẩu lại</div>
  <div class="t" style="left:43px;top:183px;font-size:13.7px;color:#222">Nhấn "Xác nhận" để ghi nhận bản ghi hợp lệ vào chương trình</div>
  <div class="abs" style="left:0;top:221px;width:600px;height:1px;background:#d5d8e3"></div>
  <div class="btn" style="left:312px;top:231px;width:80px;height:32px;border-color:#c5c9d6"></div>
  <div class="t" style="left:339px;top:240px;font-size:13.5px;color:#222">Hủy</div>
  <div class="btn" style="left:404px;top:231px;width:82px;height:32px;border-color:#c5c9d6"></div>
  <div class="t" style="left:420px;top:240px;font-size:13.5px;color:#222">Quay lại</div>
  <div class="abs" style="left:498px;top:231px;width:86px;height:32px;background:#2e52ee;border-radius:4px"></div>
  <div class="t" style="left:514px;top:240px;font-size:13.5px;color:#fff">Xác nhận</div>
</div>
</body></html>
